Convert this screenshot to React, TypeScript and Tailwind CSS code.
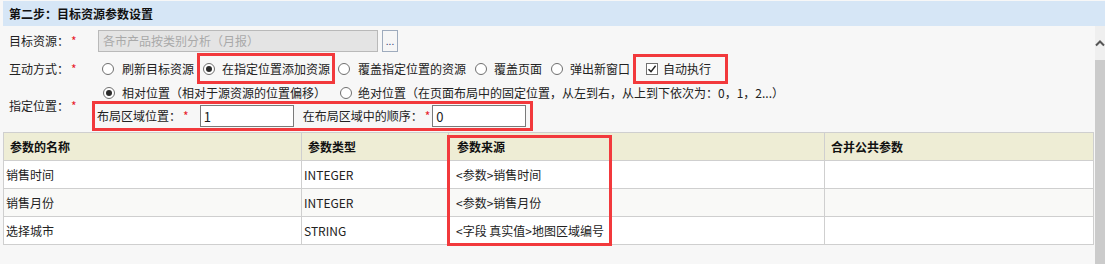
import React from 'react';

// Required-field marker
const Req = () => <span className="text-[#e8202a] ml-[2px]">*</span>;

function Radio({ checked }: { checked?: boolean }) {
  return (
    <span className="w-[12px] h-[12px] rounded-full border border-[#6f6f6f] bg-white flex items-center justify-center shrink-0">
      {checked && <span className="w-[6px] h-[6px] rounded-full bg-[#2b2b2b]" />}
    </span>
  );
}

function Checkbox() {
  return (
    <span className="w-[12px] h-[12px] border border-[#707070] bg-white flex items-center justify-center shrink-0">
      <svg width="10" height="10" viewBox="0 0 10 10">
        <path d="M1.5 5.2 L4 7.6 L8.6 1.8" fill="none" stroke="#222" strokeWidth="1.4" />
      </svg>
    </span>
  );
}

const params = [
  { name: '销售时间', type: 'INTEGER', source: '<参数>销售时间', alt: false },
  { name: '销售月份', type: 'INTEGER', source: '<参数>销售月份', alt: true },
  { name: '选择城市', type: 'STRING', source: '<字段 真实值>地图区域编号', alt: false },
];

export default function App() {
  return (
    <div className="w-[1105px] h-[264px] overflow-hidden bg-[#f7f7f7] flex flex-col text-[12px] leading-none text-[#222] font-['Noto_Sans_CJK_SC','Microsoft_YaHei',sans-serif]">
      {/* Step title */}
      <div className="mt-[1px] ml-[3px] h-[25px] bg-[#d6e6f6] flex items-center pl-[6px] font-bold text-[#111]">
        第二步：目标资源参数设置
      </div>

      <div className="flex-1 flex">
        {/* Form + table */}
        <div className="flex-1 flex flex-col pl-[3px]">
          {/* Target resource */}
          <div className="mt-[4px] h-[22px] flex items-center">
            <div className="w-[95px] pl-[6px] flex items-center">目标资源：<Req /></div>
            <div className="w-[280px] h-[22px] bg-[#e4e4e4] border border-[#b9b9b9] flex items-center pl-[4px] text-[#a9a9a9]">
              各市产品按类别分析（月报）
            </div>
            <div className="ml-[4px] w-[16px] h-[22px] border border-[#9eabbd] bg-[#f6f6f6] flex items-end justify-center pb-[5px] text-[10px] text-[#3a3a7a]">
              ...
            </div>
          </div>

          {/* Interaction mode */}
          <div className="mt-[1px] h-[31px] flex items-center">
            <div className="w-[95px] pl-[6px] flex items-center">互动方式：<Req /></div>
            <div className="ml-[4px] flex items-center">
              <Radio />
              <span className="ml-[8px]">刷新目标资源</span>
            </div>
            <div className="ml-[3px] h-[31px] border-[3px] border-[#f2393c] flex items-center pl-[3px] pr-[2px]">
              <Radio checked />
              <span className="ml-[7px]">在指定位置添加资源</span>
            </div>
            <div className="ml-[3px] flex items-center">
              <Radio />
              <span className="ml-[8px]">覆盖指定位置的资源</span>
            </div>
            <div className="ml-[9px] flex items-center">
              <Radio />
              <span className="ml-[7px]">覆盖页面</span>
            </div>
            <div className="ml-[9px] flex items-center">
              <Radio />
              <span className="ml-[7px]">弹出新窗口</span>
            </div>
            <div className="ml-[3px] h-[30px] border-[3px] border-[#f2393c] flex items-center pl-[10px] pr-[14px]">
              <Checkbox />
              <span className="ml-[5px]">自动执行</span>
            </div>
          </div>

          {/* Position */}
          <div className="mt-[1px] flex">
            <div className="w-[95px] pl-[6px] flex items-center pb-[4px]">指定位置：<Req /></div>
            <div className="flex flex-col">
              <div className="h-[16px] flex items-center">
                <div className="ml-[5px] flex items-center">
                  <Radio checked />
                  <span className="ml-[7px]">相对位置（相对于源资源的位置偏移）</span>
                </div>
                <div className="ml-[14px] flex items-center">
                  <Radio />
                  <span className="ml-[6px]">绝对位置（在页面布局中的固定位置，从左到右，从上到下依次为：0，1，2...）</span>
                </div>
              </div>
              <div className="ml-[-6px] h-[30px] w-[441px] border-[3px] border-[#f2393c] flex items-center pl-[2px]">
                <span>布局区域位置：</span>
                <Req />
                <div className="ml-[11px] w-[94px] h-[22px] bg-white border border-[#7a7a7a] flex items-center pl-[3px] text-[13px]">1</div>
                <span className="ml-[9px]">在布局区域中的顺序：</span>
                <Req />
                <div className="ml-[2px] w-[94px] h-[22px] bg-white border border-[#7a7a7a] flex items-center pl-[3px] text-[13px]">0</div>
              </div>
            </div>
          </div>

          {/* Parameters table */}
          <div className="relative mt-[1px] w-[1090px]">
            <table className="w-[1090px] border-collapse table-fixed">
              <colgroup>
                <col className="w-[298px]" />
                <col className="w-[147px]" />
                <col className="w-[376px]" />
                <col className="w-[269px]" />
              </colgroup>
              <thead>
                <tr className="h-[28px] bg-[#eeedd5] font-bold text-[#111]">
                  <th className="border border-[#cfcfcf] text-left pl-[6px] font-bold">参数的名称</th>
                  <th className="border border-[#cfcfcf] text-left pl-[6px] font-bold">参数类型</th>
                  <th className="border border-[#cfcfcf] text-left pl-[8px] font-bold">参数来源</th>
                  <th className="border border-[#cfcfcf] text-left pl-[6px] font-bold">合并公共参数</th>
                </tr>
              </thead>
              <tbody>
                {params.map((p) => (
                  <tr key={p.name} className={`h-[28px] ${p.alt ? 'bg-[#f9f9f7]' : 'bg-white'}`}>
                    <td className="border border-[#cfcfcf] pl-[2px]">{p.name}</td>
                    <td className="border border-[#cfcfcf] pl-[2px]">{p.type}</td>
                    <td className="border border-[#cfcfcf] pl-[7px]">{p.source}</td>
                    <td className="border border-[#cfcfcf]"></td>
                  </tr>
                ))}
              </tbody>
            </table>
            {/* Highlight around the source column */}
            <div className="absolute left-[444px] top-[3px] w-[165px] h-[111px] border-[3px] border-[#f2393c] pointer-events-none" />
          </div>
        </div>

        {/* Scrollbar */}
        <div className="w-[10px] flex flex-col">
          <div className="h-[34px] bg-[#efefef] flex items-center justify-center">
            <svg width="10" height="8" viewBox="0 0 10 8">
              <path d="M1 6.5 L5 2.5 L9 6.5" fill="none" stroke="#555" strokeWidth="2" />
            </svg>
          </div>
          <div className="flex-1 bg-[#cbcbcb]" />
        </div>
      </div>
    </div>
  );
}
